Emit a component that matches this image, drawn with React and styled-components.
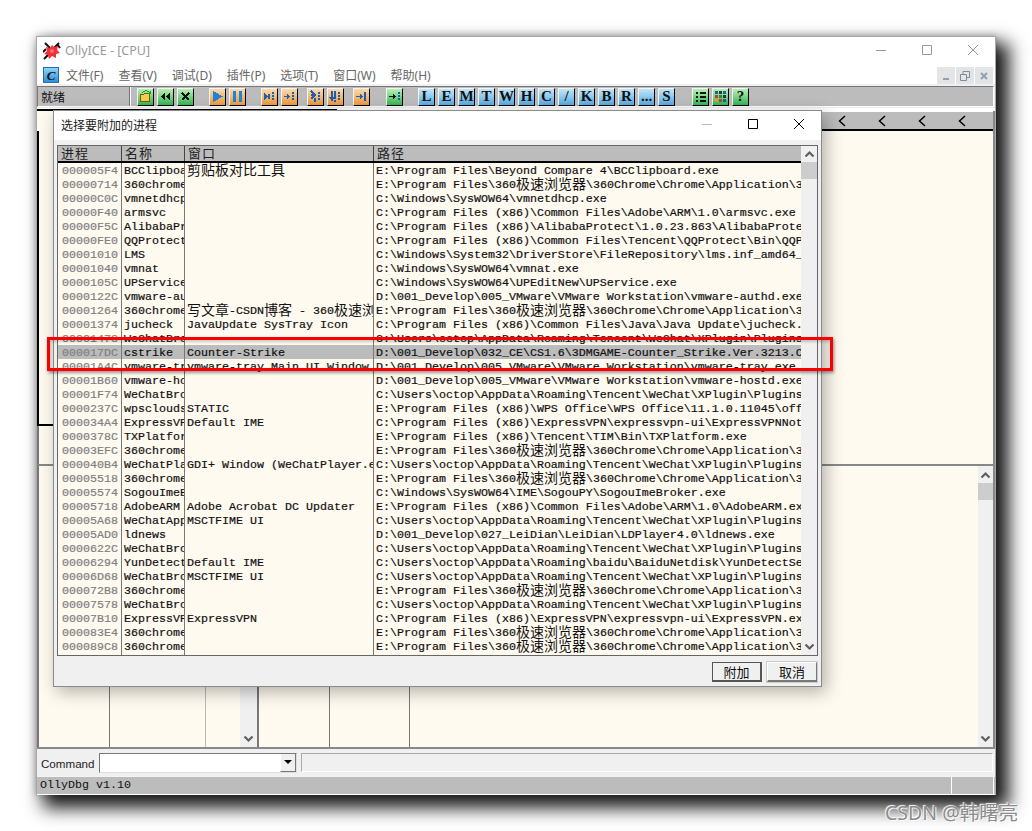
import * as React from "react";
import styled, { createGlobalStyle } from "styled-components";

const UI_FONT = `"Noto Sans", "Noto Sans CJK SC", sans-serif`;
const CJK_FONT = `"Noto Sans CJK SC", "Liberation Sans", sans-serif`;
const MONO_FONT = `"Liberation Mono", "Noto Sans CJK SC", monospace`;

const GlobalStyle = createGlobalStyle`
  html, body {
    margin: 0;
    padding: 0;
    background: #fff;
  }
  * {
    box-sizing: border-box;
  }
`;

const Page = styled.div`
  position: relative;
  width: 1032px;
  height: 831px;
  padding: 36px;
  overflow: hidden;
  background: #fff;
`;

const OllyWindow = styled.div`
  position: relative;
  width: 960px;
  height: 759px;
  display: flex;
  flex-direction: column;
  background: #fff;
  border: 1px solid #a8a8a8;
  box-shadow: 10px 10px 17px 3px rgba(0, 0, 0, 0.9), 0 0 7px rgba(0, 0, 0, 0.25);
`;

const TitleBar = styled.div`
  height: 27px;
  flex: none;
  display: flex;
  align-items: center;
  padding-left: 6px;
  background: #fff;
`;

const TitleText = styled.span`
  margin: 2px 0 0 4px;
  font: 12.5px/1 ${UI_FONT};
  color: #999;
`;

const CaptionButtons = styled.div`
  margin-left: auto;
  margin-right: -1px;
  display: flex;
`;

const CaptionButton = styled.div`
  width: 46px;
  height: 27px;
  display: flex;
  align-items: center;
  justify-content: center;
`;

const MenuBar = styled.div`
  height: 20px;
  flex: none;
  display: flex;
  align-items: center;
  gap: 15px;
  padding: 3px 0 0 6px;
  background: #fff;
`;

const MenuIcon = styled.div`
  width: 16px;
  height: 16px;
  margin-right: -8px;
  align-self: flex-start;
  display: flex;
  align-items: center;
  justify-content: center;
  font: italic bold 13px/1 "Liberation Serif", serif;
  color: #111;
  background: linear-gradient(#8fd4f5, #2f8fdc);
  border: 1px solid #2b6ca8;
`;

const MenuItem = styled.span`
  font: 12px/17px ${UI_FONT};
  color: #666;
  white-space: nowrap;
`;

const MdiButtons = styled.div`
  margin-left: auto;
  display: flex;
  gap: 1px;
  padding-right: 2px;
  height: 18px;
  align-self: flex-end;
  margin-bottom: -1px;
`;

const MdiButton = styled.div`
  width: 18px;
  height: 18px;
  display: flex;
  align-items: center;
  justify-content: center;
  background: #e3e4e6;
`;

const ToolbarShell = styled.div`
  height: 24px;
  flex: none;
  padding: 2px 1px 1px 0;
  background: #f0f0f0;
`;

const Toolbar = styled.div`
  height: 21px;
  display: flex;
  align-items: center;
  background: #bcbcbc;
  border-top: 1px solid #777;
  border-left: 1px solid #777;
  border-right: 1px solid #fff;
  border-bottom: 1px solid #fff;
`;

const StatusPanel = styled.div`
  width: 92px;
  height: 100%;
  flex: none;
  padding-left: 3px;
  font: 12px/19px ${CJK_FONT};
  color: #111;
  border-right: 1px solid #777;
  box-shadow: 1px 0 0 #fff;
`;

const ToolGroup = styled.div`
  display: flex;
  gap: 3px;
  margin-left: ${(p) => p.$gap}px;
`;

const BUTTON_COLORS = {
  green: "linear-gradient(#b9efb4, #35b653)",
  orange: "linear-gradient(#fbd9ae, #ec9a3d)",
  blue: "linear-gradient(#c3e6f8, #58aae2)",
};

const ToolButton = styled.div`
  width: 17px;
  height: 18px;
  display: flex;
  align-items: center;
  justify-content: center;
  font: bold 15px/1 "Liberation Serif", serif;
  color: #111;
  background: ${(p) => BUTTON_COLORS[p.$kind]};
  border-top: 1px solid #f4f4f4;
  border-left: 1px solid #f4f4f4;
  border-right: 1px solid #000;
  border-bottom: 1px solid #000;
`;

const MdiArea = styled.div`
  height: 641px;
  flex: none;
  padding-top: 1px;
  display: flex;
  flex-direction: column;
  background: #fff;
`;

const ActiveEdge = styled.div`
  height: 2px;
  flex: none;
  background: linear-gradient(to right, #000 300px, #fff 300px);
`;

const CpuWindow = styled.div`
  flex: 1;
  min-height: 0;
  display: flex;
  flex-direction: column;
  background: #fffaf0;
  border-right: 2px solid #888;
  border-bottom: 2px solid #888;
`;

const ColumnHeader = styled.div`
  height: 20px;
  flex: none;
  margin-left: 20px;
  display: flex;
  justify-content: flex-end;
  padding-right: 11px;
  background: #bcbcbc;
  border-top: 1px solid #fff;
  border-bottom: 2px solid #000;
`;

const HeaderCell = styled.div`
  width: 40px;
  display: flex;
  align-items: center;
  justify-content: center;
`;

const UpperPane = styled.div`
  height: 333px;
  flex: none;
  border-left: 2px solid #777;
`;

const DisasmPane = styled.div`
  width: 300px;
  height: 295px;
  margin-left: -2px;
  border-left: 2px solid #000;
  border-bottom: 2px solid #000;
`;

const LowerPane = styled.div`
  flex: 1;
  min-height: 0;
  display: flex;
  border-top: 2px solid #888;
  border-left: 2px solid #777;
`;

const PaneColumn = styled.div`
  flex: ${(p) => (p.$width ? `0 0 ${p.$width}px` : "1")};
  border-right: 1px solid ${(p) => p.$line || "transparent"};
`;

const StackDivider = styled.div`
  width: 2px;
  flex: none;
  background: #777;
`;

const ScrollTrack = styled.div`
  width: ${(p) => p.$width}px;
  flex: none;
  display: flex;
  flex-direction: column;
  align-items: stretch;
  background: #f0f0f0;
`;

const ScrollArrow = styled.div`
  height: ${(p) => p.$height}px;
  flex: none;
  display: flex;
  align-items: center;
  justify-content: center;
  margin-top: ${(p) => (p.$end ? "auto" : "0")};
`;

const ScrollThumb = styled.div`
  height: 17px;
  flex: none;
  background: #cdcdcd;
`;

const CommandBar = styled.div`
  height: 27px;
  flex: none;
  display: flex;
  align-items: center;
  padding: 0 2px 0 4px;
  background: #f0f0f0;
`;

const CommandLabel = styled.span`
  width: 58px;
  flex: none;
  padding-top: 2px;
  font: 11.6px/1 "Liberation Sans", sans-serif;
  color: #222;
`;

const CommandInput = styled.div`
  width: 198px;
  height: 20px;
  flex: none;
  display: flex;
  justify-content: flex-end;
  background: #fff;
  border-top: 1px solid #777;
  border-left: 1px solid #777;
  border-right: 1px solid #ddd;
  border-bottom: 1px solid #ddd;
`;

const DropButton = styled.div`
  width: 16px;
  display: flex;
  align-items: center;
  justify-content: center;
  background: #f0f0f0;
  border-left: 1px solid #fff;
  border-right: 1px solid #777;
  border-bottom: 1px solid #777;
`;

const DropTriangle = styled.div`
  width: 0;
  height: 0;
  border-left: 4px solid transparent;
  border-right: 4px solid transparent;
  border-top: 4px solid #000;
`;

const CommandField = styled.div`
  flex: 1;
  height: 19px;
  margin-left: 4px;
  background: #f0f0f0;
  border-top: 1px solid #aaa;
  border-left: 1px solid #aaa;
  border-right: 1px solid #fff;
  border-bottom: 1px solid #fff;
`;

const StatusBar = styled.div`
  flex: 1;
  display: flex;
  background: #bcbcbc;
  border-top: 1px solid #f4f4f4;
  border-bottom: 1px solid #fff;
`;

const StatusText = styled.div`
  flex: 1;
  padding-left: 3px;
  font: 11.67px/17px ${MONO_FONT};
  color: #111;
`;

const StatusCell = styled.div`
  width: 43px;
  flex: none;
  border-left: 1px solid #fff;
  border-right: 1px solid #fff;
  margin-right: 1px;
`;

/* attach dialog, floats over the CPU window */
const Dialog = styled.div`
  position: absolute;
  left: 16px;
  top: 73px;
  width: 769px;
  height: 577px;
  display: flex;
  flex-direction: column;
  background: #f0f0f0;
  border: 1px solid #8a8a8a;
  box-shadow: 4px 5px 16px rgba(0, 0, 0, 0.3);
`;

const DialogTitle = styled.div`
  height: 29px;
  flex: none;
  display: flex;
  align-items: center;
  padding: 0 0 2px 7px;
  font: 12px/1 ${CJK_FONT};
  color: #222;
  background: #fff;
`;

const ProcessList = styled.div`
  height: 511px;
  margin: 5px 3px 0;
  display: flex;
  background: #fffaf0;
  border: 1px solid #666;
`;

const ListMain = styled.div`
  width: 743px;
  flex: none;
  display: flex;
  flex-direction: column;
`;

const ListHeader = styled.div`
  height: 17px;
  flex: none;
  display: grid;
  grid-template-columns: 64px 63px 189px 427px;
  background: #bcbcbc;
  border-bottom: 2px solid #000;
`;

const HeaderLabel = styled.div`
  padding-left: 3px;
  font: 13px/13px ${CJK_FONT};
  letter-spacing: 1px;
  color: #222;
  border-right: 1px solid #444;
  &:last-child {
    border-right: 0;
  }
`;

const ListRow = styled.div`
  height: 14px;
  display: grid;
  grid-template-columns: 64px 63px 189px 427px;
  background: ${(p) => (p.$selected ? "#bcbcbc" : "transparent")};
  &:last-child {
    height: 16px;
  }
`;

const Cell = styled.div`
  padding: 1px 0 0 ${(p) => (p.$pid ? 4 : 2)}px;
  font: 11.67px/14px ${MONO_FONT};
  -webkit-text-stroke: 0.2px;
  color: ${(p) => (p.$pid ? "#808080" : "#111")};
  white-space: pre;
  overflow: hidden;
  border-right: 1px solid #777;
  &:last-child {
    border-right: 0;
  }
`;

// taller glyphs must not push the row's baseline down
const CjkRun = styled.span`
  display: inline-block;
  height: 14px;
  margin-top: -2px;
  vertical-align: top;
  font: 14px/14px ${CJK_FONT};
  -webkit-text-stroke: 0;
`;

const DialogFooter = styled.div`
  flex: 1;
  display: flex;
  justify-content: flex-end;
  align-items: flex-start;
  gap: 5px;
  padding: 6px 4px 0 0;
`;

const DialogButton = styled.div`
  width: 50px;
  height: 20px;
  display: flex;
  align-items: center;
  justify-content: center;
  font: 13px/1 ${CJK_FONT};
  color: #111;
  background: #f0f0f0;
  border-top: 1px solid ${(p) => (p.$primary ? "#555" : "#fff")};
  border-left: 1px solid ${(p) => (p.$primary ? "#555" : "#fff")};
  border-right: ${(p) => (p.$primary ? "2px solid #555" : "1px solid #777")};
  border-bottom: ${(p) => (p.$primary ? "2px solid #555" : "2px solid #777")};
  box-shadow: 0 0 0 ${(p) => (p.$primary ? 0 : 1)}px #ccc;
`;

const Highlight = styled.div`
  position: absolute;
  left: 47px;
  top: 337px;
  width: 786px;
  height: 34px;
  border: 3px solid #fb0000;
  box-shadow: 1px 2px 3px rgba(0, 0, 0, 0.4), inset 1px 2px 3px rgba(0, 0, 0, 0.2);
`;

const Watermark = styled.div`
  position: absolute;
  left: 885px;
  top: 800px;
  font: 19.5px/26px "Noto Sans", "Noto Sans CJK SC", sans-serif;
  color: #8c8c8c;
  text-shadow: 1px 1px 1px #fff, -1px -1px 1px #fff;
  white-space: nowrap;
`;

const PROCESSES = [
    ["000005F4", "BCClipboard", "剪贴板对比工具", "E:\\Program Files\\Beyond Compare 4\\BCClipboard.exe"],
    ["00000714", "360chrome", "", "E:\\Program Files\\360极速浏览器\\360Chrome\\Chrome\\Application\\360chrome.exe"],
    ["00000C0C", "vmnetdhcp", "", "C:\\Windows\\SysWOW64\\vmnetdhcp.exe"],
    ["00000F40", "armsvc", "", "C:\\Program Files (x86)\\Common Files\\Adobe\\ARM\\1.0\\armsvc.exe"],
    ["00000F5C", "AlibabaProtect", "", "C:\\Program Files (x86)\\AlibabaProtect\\1.0.23.863\\AlibabaProtect.exe"],
    ["00000FE0", "QQProtect", "", "C:\\Program Files (x86)\\Common Files\\Tencent\\QQProtect\\Bin\\QQProtect.exe"],
    ["00001010", "LMS", "", "C:\\Windows\\System32\\DriverStore\\FileRepository\\lms.inf_amd64_1234.exe"],
    ["00001040", "vmnat", "", "C:\\Windows\\SysWOW64\\vmnat.exe"],
    ["0000105C", "UPService", "", "C:\\Windows\\SysWOW64\\UPEditNew\\UPService.exe"],
    ["0000122C", "vmware-authd", "", "D:\\001_Develop\\005_VMware\\VMware Workstation\\vmware-authd.exe"],
    ["00001264", "360chrome", "写文章-CSDN博客 - 360极速浏览器", "E:\\Program Files\\360极速浏览器\\360Chrome\\Chrome\\Application\\360chrome.exe"],
    ["00001374", "jucheck", "JavaUpdate SysTray Icon", "C:\\Program Files (x86)\\Common Files\\Java\\Java Update\\jucheck.exe"],
    ["00001478", "WeChatBrowser", "", "C:\\Users\\octop\\AppData\\Roaming\\Tencent\\WeChat\\XPlugin\\Plugins\\x"],
    ["000017DC", "cstrike", "Counter-Strike", "D:\\001_Develop\\032_CE\\CS1.6\\3DMGAME-Counter_Strike.Ver.3213.CHS"],
    ["00001A4C", "vmware-tray", "vmware-tray Main UI Window", "D:\\001_Develop\\005_VMware\\VMware Workstation\\vmware-tray.exe"],
    ["00001B60", "vmware-hostd", "", "D:\\001_Develop\\005_VMware\\VMware Workstation\\vmware-hostd.exe"],
    ["00001F74", "WeChatBrowser", "", "C:\\Users\\octop\\AppData\\Roaming\\Tencent\\WeChat\\XPlugin\\Plugins\\x"],
    ["0000237C", "wpscloudsvr", "STATIC", "E:\\Program Files (x86)\\WPS Office\\WPS Office\\11.1.0.11045\\office6"],
    ["000034A4", "ExpressVPN", "Default IME", "C:\\Program Files (x86)\\ExpressVPN\\expressvpn-ui\\ExpressVPNNotify"],
    ["0000378C", "TXPlatform", "", "E:\\Program Files (x86)\\Tencent\\TIM\\Bin\\TXPlatform.exe"],
    ["00003EFC", "360chrome", "", "E:\\Program Files\\360极速浏览器\\360Chrome\\Chrome\\Application\\360chrome.exe"],
    ["000040B4", "WeChatPlayer", "GDI+ Window (WeChatPlayer.exe)", "C:\\Users\\octop\\AppData\\Roaming\\Tencent\\WeChat\\XPlugin\\Plugins\\x"],
    ["00005518", "360chrome", "", "E:\\Program Files\\360极速浏览器\\360Chrome\\Chrome\\Application\\360chrome.exe"],
    ["00005574", "SogouImeBroker", "", "C:\\Windows\\SysWOW64\\IME\\SogouPY\\SogouImeBroker.exe"],
    ["00005718", "AdobeARM", "Adobe Acrobat DC Updater", "E:\\Program Files (x86)\\Common Files\\Adobe\\ARM\\1.0\\AdobeARM.exe"],
    ["00005A68", "WeChatApp", "MSCTFIME UI", "C:\\Users\\octop\\AppData\\Roaming\\Tencent\\WeChat\\XPlugin\\Plugins\\x"],
    ["00005AD0", "ldnews", "", "D:\\001_Develop\\027_LeiDian\\LeiDian\\LDPlayer4.0\\ldnews.exe"],
    ["0000622C", "WeChatBrowser", "", "C:\\Users\\octop\\AppData\\Roaming\\Tencent\\WeChat\\XPlugin\\Plugins\\x"],
    ["00006294", "YunDetectService", "Default IME", "C:\\Users\\octop\\AppData\\Roaming\\baidu\\BaiduNetdisk\\YunDetectService.exe"],
    ["00006D68", "WeChatBrowser", "MSCTFIME UI", "C:\\Users\\octop\\AppData\\Roaming\\Tencent\\WeChat\\XPlugin\\Plugins\\x"],
    ["000072B8", "360chrome", "", "E:\\Program Files\\360极速浏览器\\360Chrome\\Chrome\\Application\\360chrome.exe"],
    ["00007578", "WeChatBrowser", "", "C:\\Users\\octop\\AppData\\Roaming\\Tencent\\WeChat\\XPlugin\\Plugins\\x"],
    ["00007B10", "ExpressVPN", "ExpressVPN", "C:\\Program Files (x86)\\ExpressVPN\\expressvpn-ui\\ExpressVPN.exe"],
    ["000083E4", "360chrome", "", "E:\\Program Files\\360极速浏览器\\360Chrome\\Chrome\\Application\\360chrome.exe"],
    ["000089C8", "360chrome", "", "E:\\Program Files\\360极速浏览器\\360Chrome\\Chrome\\Application\\360chrome.exe"],
];

const LETTERS = ["L", "E", "M", "T", "W", "H", "C", "/", "K", "B", "R", "...", "S"];
const MENUS = ["文件(F)", "查看(V)", "调试(D)", "插件(P)", "选项(T)", "窗口(W)", "帮助(H)"];

// SimSun-sized runs inside the monospace cells
const withCjk = (text) =>
    text.split(/([\u4e00-\u9fff]+)/).map((part, i) =>
        /[\u4e00-\u9fff]/.test(part) ? <CjkRun key={i}>{part}</CjkRun> : part
    );

const Icon = ({ size = 13, children }) => (
    <svg width={size} height={size} viewBox="0 0 13 13" fill="none" shapeRendering="crispEdges">
        {children}
    </svg>
);

const AppLogo = () => (
    <svg width="18" height="18" viewBox="0 0 18 18">
        <path d="M2 1 L7 6 M16 1 L11 6 M1 17 L6 12 M14 2 L17 6 M3 7 L0 10" stroke="#111" strokeWidth="2" />
        <path d="M9 3 L11 5 L15 4 L14 8 L17 11 L13 12 L13 16 L9 14 L6 17 L5 13 L1 12 L4 9 L3 5 L7 6 Z" fill="#f2303a" />
        <circle cx="9" cy="9" r="2" fill="#ff7078" />
    </svg>
);

const LineIcon = ({ d, color = "#999", size = 13 }) => (
    <svg width={size} height={size} viewBox="0 0 13 13" fill="none">
        <path d={d} stroke={color} strokeWidth="1" />
    </svg>
);

const Chevron = ({ d, color = "#606060", width = 2.2 }) => (
    <svg width="11" height="8" viewBox="0 0 11 8" fill="none">
        <path d={d} stroke={color} strokeWidth={width} />
    </svg>
);
const ChevronUp = () => <Chevron d="M1.5 6.5 L5.5 2.5 L9.5 6.5" />;
const ChevronDown = () => <Chevron d="M1.5 1.5 L5.5 5.5 L9.5 1.5" />;

const ChevronLeft = () => (
    <svg width="8" height="12" viewBox="0 0 8 12" fill="none">
        <path d="M7 1 L1.5 6 L7 11" stroke="#000" strokeWidth="1.5" />
    </svg>
);

const Dots = ({ x = 9 }) => (
    <g fill="#1c5fb0">
        <rect x={x} y="2" width="2" height="2" />
        <rect x={x} y="5" width="2" height="2" />
        <rect x={x} y="8" width="2" height="2" />
    </g>
);

const Glyphs = {
    open: (
        <Icon>
            <path d="M1 4 H5 L6 3 H10 V11 H1 Z" fill="#f1cf4e" stroke="#7a5b10" />
            <path d="M3 3 C5 0 9 0 11 3 M11 1 V3 H9" stroke="#16a030" strokeWidth="1" />
        </Icon>
    ),
    rewind: (
        <Icon>
            <path d="M6 3 L2 6.5 L6 10 Z M11 3 L7 6.5 L11 10 Z" fill="#111" />
        </Icon>
    ),
    close: (
        <Icon>
            <path d="M3 3 L10 10 M10 3 L3 10" stroke="#111" strokeWidth="2" />
        </Icon>
    ),
    play: (
        <Icon>
            <path d="M2 1 L12 6.5 L2 12 Z" fill="#1f83d8" />
        </Icon>
    ),
    pause: (
        <Icon>
            <path d="M2 1 H5 V12 H2 Z M8 1 H11 V12 H8 Z" fill="#1f83d8" />
        </Icon>
    ),
    stepInto: (
        <Icon>
            <path d="M1 3 L5 6 V4 H7 V9 H5 V7 L1 10 Z" fill="#1c5fb0" />
            <Dots />
        </Icon>
    ),
    stepOver: (
        <Icon>
            <path d="M1 6 H4 V3 L7 6.5 L4 10 V7 H1 Z" fill="#1c5fb0" />
            <Dots />
        </Icon>
    ),
    animInto: (
        <Icon>
            <path d="M2 1 L6 5 L2 9 M2 5 H6 M6 8 V12" stroke="#1c5fb0" strokeWidth="1.5" />
            <Dots />
        </Icon>
    ),
    animOver: (
        <Icon>
            <path d="M3 1 V9 M1 7 L3 10 L5 7 M6 1 V9 M6 12 V10" stroke="#1c5fb0" strokeWidth="1.5" />
            <Dots />
        </Icon>
    ),
    runTo: (
        <Icon>
            <path d="M1 6 H5 V3 L8 6.5 L5 10 V7 H1 Z" fill="#1c5fb0" />
            <path d="M10 2 V11" stroke="#1c5fb0" strokeWidth="2" />
        </Icon>
    ),
    goto: (
        <Icon>
            <path d="M1 6 H5 V3 L8 6.5 L5 10 V7 H1 Z" fill="#111" />
            <Dots x={10} />
        </Icon>
    ),
    list: (
        <Icon>
            <path d="M2 2 H4 V4 H2 Z M2 6 H4 V8 H2 Z M2 10 H4 V12 H2 Z M6 2 H12 V4 H6 Z M6 6 H12 V8 H6 Z M6 10 H12 V12 H6 Z" fill="#111" />
        </Icon>
    ),
    grid: (
        <Icon>
            <path d="M1 1 H4 V4 H1 Z" fill="#1c5fb0" />
            <path d="M5 1 H8 V4 H5 Z" fill="#333" />
            <path d="M9 1 H12 V4 H9 Z" fill="#1c5fb0" />
            <path d="M1 5 H4 V8 H1 Z" fill="#c83a2a" />
            <path d="M5 5 H8 V8 H5 Z" fill="#1c8f3a" />
            <path d="M9 5 H12 V8 H9 Z" fill="#333" />
            <path d="M1 9 H4 V12 H1 Z" fill="#e0a020" />
            <path d="M5 9 H8 V12 H5 Z" fill="#c83a2a" />
            <path d="M9 9 H12 V12 H9 Z" fill="#1c5fb0" />
        </Icon>
    ),
};

const ScrollBar = ({ width = 17, arrow = 17, thumb = true }) => (
    <ScrollTrack $width={width}>
        <ScrollArrow $height={arrow}><ChevronUp /></ScrollArrow>
        {thumb && <ScrollThumb />}
        <ScrollArrow $height={17} $end><ChevronDown /></ScrollArrow>
    </ScrollTrack>
);

const TOOL_GROUPS = [
    { gap: 7, kind: "green", items: [Glyphs.open, Glyphs.rewind, Glyphs.close] },
    { gap: 15, kind: "orange", items: [Glyphs.play, Glyphs.pause] },
    { gap: 15, kind: "orange", items: [Glyphs.stepInto, Glyphs.stepOver] },
    { gap: 9, kind: "orange", items: [Glyphs.animInto, Glyphs.animOver] },
    { gap: 9, kind: "orange", items: [Glyphs.runTo] },
    { gap: 16, kind: "green", items: [Glyphs.goto] },
    { gap: 15, kind: "blue", items: LETTERS },
    { gap: 17, kind: "green", items: [Glyphs.list, Glyphs.grid, "?"] },
];

export default function App() {
    return (
        <Page>
            <GlobalStyle />
            <OllyWindow>
                <TitleBar>
                    <AppLogo />
                    <TitleText>OllyICE - [CPU]</TitleText>
                    <CaptionButtons>
                        <CaptionButton>
                            <LineIcon d="M1 6.5 H11" />
                        </CaptionButton>
                        <CaptionButton>
                            <LineIcon d="M1.5 1.5 H10.5 V10.5 H1.5 Z" />
                        </CaptionButton>
                        <CaptionButton>
                            <LineIcon d="M1 1 L11 11 M11 1 L1 11" />
                        </CaptionButton>
                    </CaptionButtons>
                </TitleBar>

                <MenuBar>
                    <MenuIcon>C</MenuIcon>
                    {MENUS.map((m) => (
                        <MenuItem key={m}>{m}</MenuItem>
                    ))}
                    <MdiButtons>
                        <MdiButton>
                            <svg width="10" height="10" viewBox="0 0 10 10"><path d="M2 7 H8 V9 H2 Z" fill="#93a0b0" /></svg>
                        </MdiButton>
                        <MdiButton>
                            <svg width="10" height="10" viewBox="0 0 10 10" fill="none"><path d="M0.5 3.5 H6.5 V9.5 H0.5 Z M3 3 V0.5 H9.5 V6.5 H7" stroke="#7e8c9c" /></svg>
                        </MdiButton>
                        <MdiButton>
                            <svg width="10" height="10" viewBox="0 0 10 10" fill="none"><path d="M2 2 L8 8 M8 2 L2 8" stroke="#93a0b0" strokeWidth="2" /></svg>
                        </MdiButton>
                    </MdiButtons>
                </MenuBar>

                <ToolbarShell>
                    <Toolbar>
                        <StatusPanel>就绪</StatusPanel>
                        {TOOL_GROUPS.map((group, g) => (
                            <ToolGroup key={g} $gap={group.gap}>
                                {group.items.map((item, i) => (
                                    <ToolButton key={i} $kind={group.kind}>{item}</ToolButton>
                                ))}
                            </ToolGroup>
                        ))}
                    </Toolbar>
                </ToolbarShell>

                <MdiArea>
                    <ActiveEdge />
                    <CpuWindow>
                        <ColumnHeader>
                            {[0, 1, 2, 3].map((i) => (
                                <HeaderCell key={i}><ChevronLeft /></HeaderCell>
                            ))}
                        </ColumnHeader>
                        <UpperPane>
                            <DisasmPane />
                        </UpperPane>
                        <LowerPane>
                            <PaneColumn $width={71} $line="#777" />
                            <PaneColumn $width={96} $line="#bbb" />
                            <PaneColumn $width={34} />
                            <ScrollBar thumb={false} />
                            <StackDivider />
                            <PaneColumn $width={71} $line="#777" />
                            <PaneColumn $width={80} $line="#777" />
                            <PaneColumn />
                            <ScrollBar width={15} />
                        </LowerPane>
                    </CpuWindow>
                </MdiArea>

                <CommandBar>
                    <CommandLabel>Command</CommandLabel>
                    <CommandInput>
                        <DropButton><DropTriangle /></DropButton>
                    </CommandInput>
                    <CommandField />
                </CommandBar>

                <StatusBar>
                    <StatusText>OllyDbg v1.10</StatusText>
                    <StatusCell />
                </StatusBar>

                <Dialog>
                    <DialogTitle>
                        选择要附加的进程
                        <CaptionButtons>
                            <CaptionButton>
                                <LineIcon d="M1 6.5 H11" color="#bbb" />
                            </CaptionButton>
                            <CaptionButton>
                                <LineIcon d="M1.5 1.5 H10.5 V10.5 H1.5 Z" color="#000" />
                            </CaptionButton>
                            <CaptionButton>
                                <LineIcon d="M1 1 L11 11 M11 1 L1 11" color="#000" />
                            </CaptionButton>
                        </CaptionButtons>
                    </DialogTitle>
                    <ProcessList>
                        <ListMain>
                            <ListHeader>
                                <HeaderLabel>进程</HeaderLabel>
                                <HeaderLabel>名称</HeaderLabel>
                                <HeaderLabel>窗口</HeaderLabel>
                                <HeaderLabel>路径</HeaderLabel>
                            </ListHeader>
                            {PROCESSES.map(([pid, name, title, path]) => (
                                <ListRow key={pid} $selected={pid === "000017DC"}>
                                    <Cell $pid>{pid}</Cell>
                                    <Cell>{name}</Cell>
                                    <Cell>{withCjk(title)}</Cell>
                                    <Cell>{withCjk(path)}</Cell>
                                </ListRow>
                            ))}
                        </ListMain>
                        <ScrollBar width={16} arrow={16} />
                    </ProcessList>
                    <DialogFooter>
                        <DialogButton $primary>附加</DialogButton>
                        <DialogButton>取消</DialogButton>
                    </DialogFooter>
                </Dialog>
            </OllyWindow>
            <Highlight />
            <Watermark>CSDN @韩曙亮</Watermark>
        </Page>
    );
}
